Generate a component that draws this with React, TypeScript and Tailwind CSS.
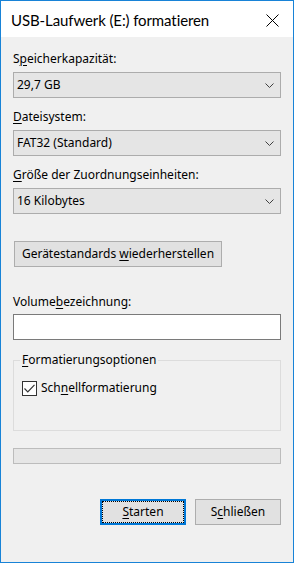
import React from "react";

// Label with a keyboard mnemonic letter underlined, like Win32 dialogs
function Mn({ text, at }: { text: string; at: number }) {
  return (
    <>
      {text.slice(0, at)}
      <span className="underline underline-offset-[2px] decoration-[1px]">{text[at]}</span>
      {text.slice(at + 1)}
    </>
  );
}

function Chevron() {
  return (
    <svg width="9" height="5" viewBox="0 0 9 5" className="shrink-0">
      <path d="M0.5 0.5 L4.5 4.5 L8.5 0.5" fill="none" stroke="#404040" strokeWidth="1" />
    </svg>
  );
}

function Combo({ value }: { value: string }) {
  return (
    <div className="h-[26px] w-full border border-[#acacac] bg-[#e5e5e5] flex items-center justify-between pl-[3px] pr-[6px]">
      <span className="leading-[16px]">{value}</span>
      <Chevron />
    </div>
  );
}

export default function App() {
  return (
    <div className="w-[294px] h-[563px] border border-[#1883d7] bg-[#f0f0f0] flex flex-col font-['Noto_Sans',sans-serif] text-[12px] text-black overflow-hidden">
      {/* Title bar */}
      <div className="h-[36px] shrink-0 bg-white flex items-center justify-between pl-[10px] pr-[14px]">
        <span className="font-['Lato',sans-serif] text-[15px] tracking-[-0.1px] leading-[20px] pt-[2px]">USB-Laufwerk (E:) formatieren</span>
        <svg width="13" height="13" viewBox="0 0 13 13" className="mt-[2px]">
          <path d="M0.5 0.5 L12.5 12.5 M12.5 0.5 L0.5 12.5" stroke="#000" strokeWidth="1" />
        </svg>
      </div>

      {/* Body */}
      <div className="flex flex-col px-[12px] pt-[14px]">
        <div className="h-[16px] leading-[16px] mb-[5px]"><Mn text="Speicherkapazität:" at={1} /></div>
        <Combo value="29,7 GB" />

        <div className="h-[16px] leading-[16px] mt-[11px] mb-[5px]"><Mn text="Dateisystem:" at={0} /></div>
        <Combo value="FAT32 (Standard)" />

        <div className="h-[16px] leading-[16px] mt-[11px] mb-[5px]"><Mn text="Größe der Zuordnungseinheiten:" at={0} /></div>
        <Combo value="16 Kilobytes" />

        <button className="mt-[27px] ml-[1px] h-[26px] w-[208px] border border-[#adadad] bg-[#e1e1e1] leading-[16px] text-center">
          <Mn text="Gerätestandards wiederherstellen" at={16} />
        </button>

        <div className="h-[16px] leading-[16px] mt-[27px] mb-[4px]"><Mn text="Volumebezeichnung:" at={6} /></div>
        <div className="h-[26px] w-full border border-[#7a7a7a] bg-white" />

        <fieldset className="mt-[12px] border border-[#dcdcdc] pl-[6px] pb-[34px]">
          <legend className="px-[2px] h-[16px] leading-[16px]"><Mn text="Formatierungsoptionen" at={0} /></legend>
          <div className="mt-[12px] ml-[2px] flex items-center h-[16px]">
            <div className="w-[15px] h-[15px] border border-[#333333] bg-white flex items-center justify-center">
              <svg width="11" height="9" viewBox="0 0 11 9">
                <path d="M0.5 4.5 L3.8 7.8 L10.5 0.8" fill="none" stroke="#333333" strokeWidth="1.2" />
              </svg>
            </div>
            <span className="ml-[4px] leading-[16px]"><Mn text="Schnellformatierung" at={3} /></span>
          </div>
        </fieldset>

        {/* Progress bar */}
        <div className="mt-[17px] h-[16px] w-full border border-[#bcbcbc] bg-[#e6e6e6]" />

        {/* Action buttons */}
        <div className="mt-[35px] flex justify-end gap-[9px]">
          <button className="h-[26px] w-[86px] border-2 border-[#0078d7] bg-[#e1e1e1] p-0">
            <div className="h-full w-full border border-dotted border-black flex items-center justify-center leading-[16px]">
              <Mn text="Starten" at={0} />
            </div>
          </button>
          <button className="h-[26px] w-[86px] border border-[#adadad] bg-[#e1e1e1] leading-[16px]">
            <Mn text="Schließen" at={1} />
          </button>
        </div>
      </div>
    </div>
  );
}
